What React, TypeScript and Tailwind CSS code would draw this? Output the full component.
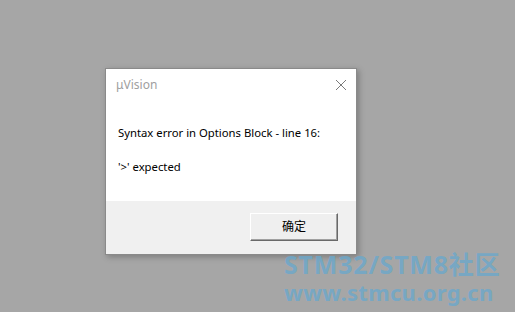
export default function App() {
  return (
    <div className="relative h-[312px] w-[515px] overflow-hidden bg-[#a6a6a6]" style={{ fontFamily: '"Noto Sans", "Noto Sans CJK SC", sans-serif' }}>
      <div className="absolute left-[105px] top-[68px] flex h-[187px] w-[252px] flex-col border border-[#8a8a8a] bg-white shadow-[2px_2px_6px_rgba(0,0,0,0.25)]">
        <div className="flex h-[31px] items-center justify-between pl-[10px] pr-[8px]">
          <span className="text-[12px] text-[#a0a0a0]">μVision</span>
          <svg width="12" height="12" viewBox="0 0 12 12" className="mr-[1px]">
            <path d="M1 1L11 11M11 1L1 11" stroke="#7a7a7a" strokeWidth="1" />
          </svg>
        </div>
        <div className="flex flex-1 flex-col gap-[17px] pl-[12px] pt-[25px] text-[11.3px] text-black">
          <p>Syntax error in Options Block - line 16:</p>
          <p>'&gt;' expected</p>
        </div>
        <div className="flex h-[53px] items-start justify-end bg-[#f0f0f0] pr-[18px] pt-[12px]">
          <button className="h-[28px] w-[88px] border border-t-white border-l-white border-r-[#696969] border-b-[#696969] bg-[#efefef] text-[12px] text-black shadow-[inset_-1px_-1px_0_#a0a0a0]">
            确定
          </button>
        </div>
      </div>
      <div className="absolute left-[284px] top-[252px] flex flex-col items-start leading-none text-[#6aa8cc]/80 font-bold">
        <span className="text-[25px] tracking-[0.8px]">STM32/STM8社区</span>
        <span className="mt-[4px] text-[22px] tracking-[0.3px]">www.stmcu.org.cn</span>
      </div>
    </div>
  );
}
